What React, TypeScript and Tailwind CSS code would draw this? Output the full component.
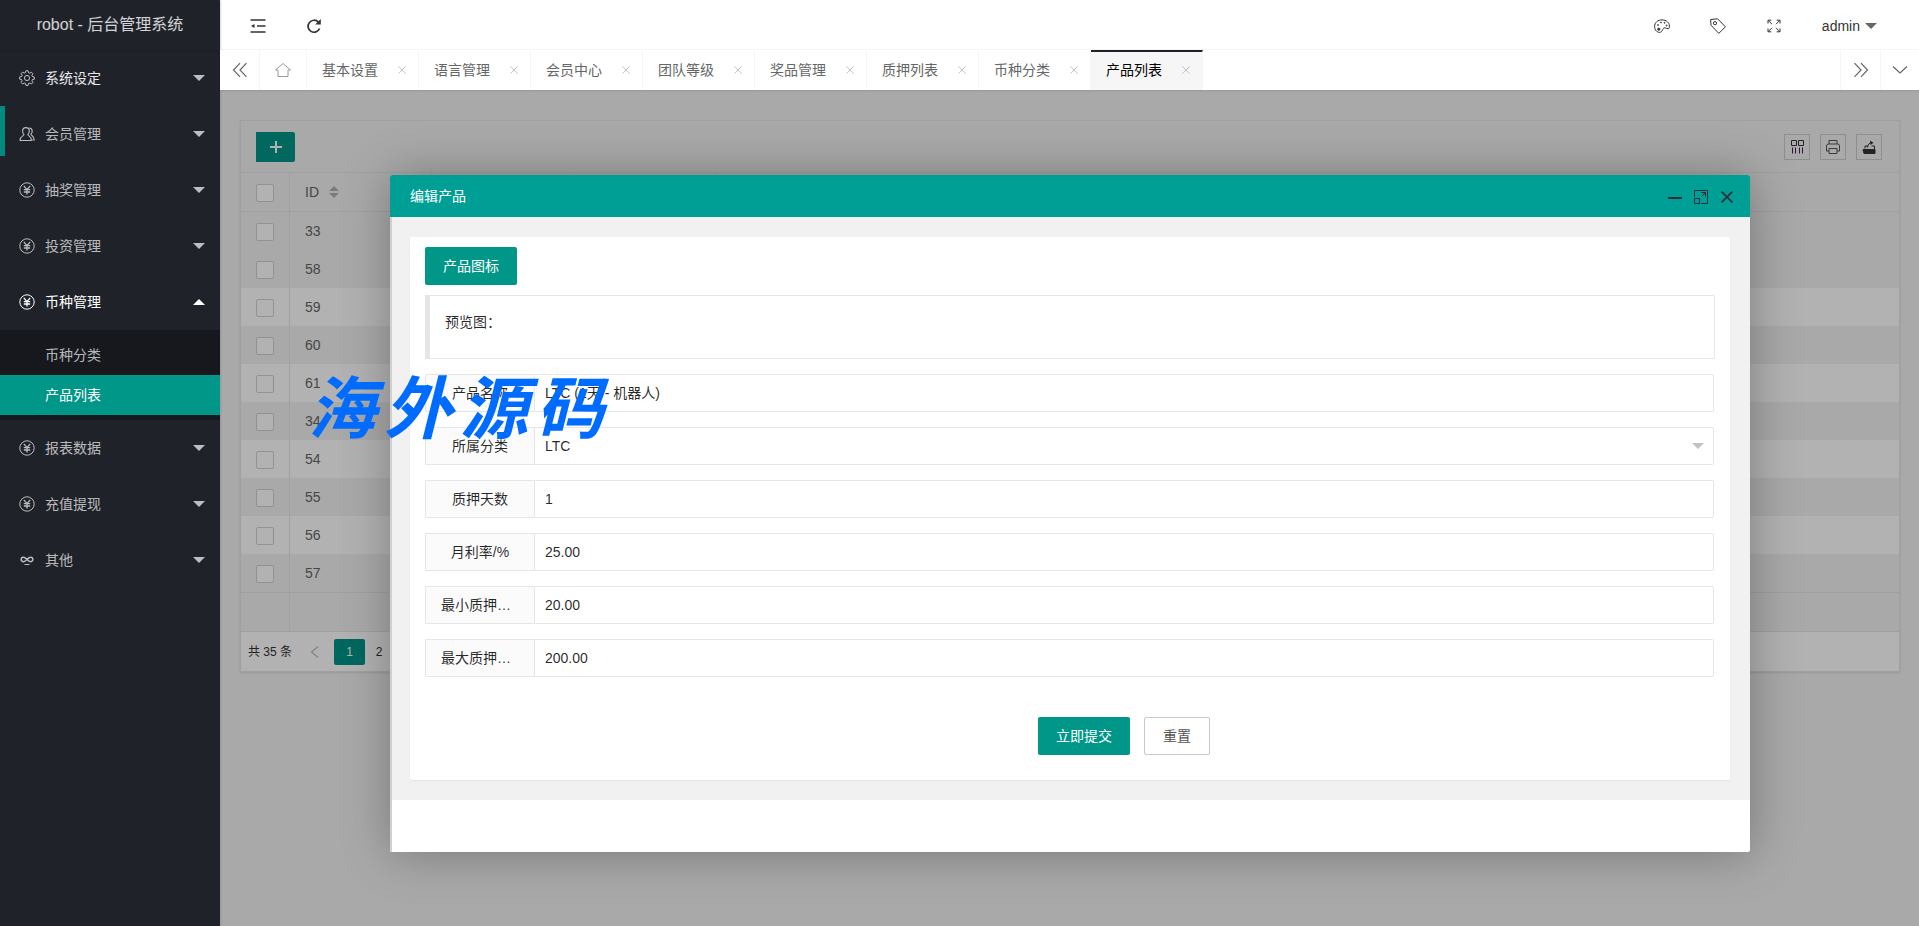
import type { ReactNode } from "react";

type IconProps = { children: ReactNode; size?: string; box?: string; width?: number };

function Icon({ children, size = "size-4", box = "0 0 16 16", width = 1 }: IconProps) {
  return (
    <svg
      className={`${size} shrink-0`}
      viewBox={box}
      fill="none"
      stroke="currentColor"
      strokeWidth={width}
      aria-hidden="true"
    >
      {children}
    </svg>
  );
}

const Caret = ({ up = false }: { up?: boolean }) => (
  <svg className="h-1.5 w-3 shrink-0" viewBox="0 0 12 6" fill="currentColor" aria-hidden="true">
    <path d={up ? "M0 6h12L6 0z" : "M0 0h12L6 6z"} />
  </svg>
);

const GearIcon = () => (
  <Icon width={1}>
    <circle cx="8" cy="8" r="2.600" />
    <path d="M6.900.8h2.200l.4 1.900 1.300.5 1.600-1 1.500 1.500-1 1.600.5 1.300 1.900.4v2.200l-1.900.4-.5 1.300 1 1.600-1.500 1.500-1.600-1-1.300.5-.4 1.900H6.900l-.4-1.900-1.300-.5-1.600 1-1.500-1.500 1-1.600-.5-1.300-1.900-.4V6.900l1.900-.4.5-1.300-1-1.600 1.500-1.500 1.600 1 1.300-.5z" />
  </Icon>
);

const UsersIcon = () => (
  <Icon width={1.1}>
    <path d="M7 1.600c2 0 3.300 1.500 3.300 3.600 0 1.500-.7 2.600-1.500 3.400 0 1.500 3.600 1.400 3.600 5.900H1c0-4.500 4-4.400 4-5.900-.8-.8-1.400-1.900-1.400-3.400C3.600 3.100 5 1.600 7 1.600z" />
    <path d="M10.200 2c2 .1 3 1.500 3 3.200 0 1.400-.6 2.300-1.300 3 0 1.400 3.300 1.500 3.300 5.800h-2" />
  </Icon>
);

const YenIcon = () => (
  <Icon>
    <circle cx="8" cy="8" r="7.200" />
    <path d="M4.800 3.800 8 7.600l3.200-3.800M8 7.600v5M4.800 7.600h6.400M4.800 10h6.400" strokeWidth="1.300" />
  </Icon>
);

const LoopIcon = () => (
  <Icon width={1.5}>
    <path d="M8 7.500C6.600 6.100 5.700 5.300 4.400 5.300a2.200 2.200 0 0 0 0 4.400C5.700 9.700 6.600 9 8 7.500s2.300-2.200 3.600-2.200a2.200 2.200 0 0 1 0 4.400C10.300 9.700 9.400 9 8 7.500z" />
    <path d="M5.500 12.500h5" strokeWidth="1" />
  </Icon>
);

const CloseIcon = ({ size = "size-2", width = 1 }: { size?: string; width?: number }) => (
  <Icon size={size} box="0 0 8 8" width={width}>
    <path d="M.4.4l7.200 7.200M7.600.4.4 7.600" />
  </Icon>
);

type MenuEntry = { label: string; icon: ReactNode; open?: boolean; marked?: boolean; bright?: boolean };

const menu: MenuEntry[] = [
  { label: "系统设定", icon: <GearIcon />, bright: true },
  { label: "会员管理", icon: <UsersIcon />, marked: true },
  { label: "抽奖管理", icon: <YenIcon /> },
  { label: "投资管理", icon: <YenIcon /> },
  { label: "币种管理", icon: <YenIcon />, open: true },
  { label: "报表数据", icon: <YenIcon /> },
  { label: "充值提现", icon: <YenIcon /> },
  { label: "其他", icon: <LoopIcon /> },
];

const tabs = ["基本设置", "语言管理", "会员中心", "团队等级", "奖品管理", "质押列表", "币种分类", "产品列表"];

const rows = [33, 58, 59, 60, 61, 34, 54, 55, 56, 57];

const fields = [
  { id: "name", label: "产品名称", value: "LTC (1天 - 机器人)" },
  { id: "category", label: "所属分类", value: "LTC", select: true },
  { id: "days", label: "质押天数", value: "1" },
  { id: "rate", label: "月利率/%", value: "25.00" },
  { id: "min", label: "最小质押…", value: "20.00", clipped: true },
  { id: "max", label: "最大质押…", value: "200.00", clipped: true },
];

function Sidebar() {
  return (
    <aside className="z-10 w-[220px] shrink-0 bg-[#20222a] text-white/70 shadow-[1px_0_2px_rgba(0,0,0,0.1)]">
      <div className="flex h-[50px] items-center justify-center text-base text-white/80 shadow-[0_1px_2px_rgba(0,0,0,0.15)]">
        robot - 后台管理系统
      </div>
      <nav>
        {menu.map((item) => (
          <div key={item.label}>
            <button
              type="button"
              className={`relative flex h-14 w-full items-center pl-[19px] pr-[15px] ${item.open ? "text-white" : ""}`}
            >
              {item.marked && <span className="absolute left-0 top-0 h-[50px] w-[5px] bg-[#009688]/90" />}
              {item.icon}
              <span className={`ml-2.5 flex-1 text-left ${item.bright ? "text-white/90" : ""}`}>{item.label}</span>
              <Caret up={item.open} />
            </button>
            {item.open && (
              <div className="bg-[#17181e] py-[5px]">
                <a href="#category" className="flex h-10 items-center pl-[45px]">
                  币种分类
                </a>
                <a href="#product" className="flex h-10 items-center bg-[#009688] pl-[45px] text-white">
                  产品列表
                </a>
              </div>
            )}
          </div>
        ))}
      </nav>
    </aside>
  );
}

function TopBar() {
  const cell = "flex h-full w-14 items-center justify-center";
  return (
    <header className="flex h-[50px] items-center border-b border-[#f6f6f6] bg-white pl-[10px] pt-0.5 text-[#333]">
      <button type="button" aria-label="侧边伸缩" className={cell}>
        <Icon width={1.500}>
          <path d="M.5 2h15M7 8h8.500M.5 14h15" />
          <path d="M1 8l3.500-2v4z" fill="currentColor" stroke="none" />
        </Icon>
      </button>
      <button type="button" aria-label="刷新" className={cell}>
        <Icon width={1.700}>
          <path d="M12.500 4.200A6 6 0 1 0 13.600 10.500" />
          <path d="M14.800 1v5.600H9.200z" fill="currentColor" stroke="none" />
        </Icon>
      </button>
      <div className="flex-1" />
      <button type="button" aria-label="主题" className={cell}>
        <Icon>
          <path d="M4.500 14.300C2 13.600.6 11.400.6 8.400c0-3.900 3.200-6.500 7.400-6.500 4.300 0 7.400 2.700 7.400 6.200 0 1.700-.2 2.600-1.100 2.600-1.300 0-1.900-.9-3.500-.9-1.500 0-1.700 1.200-2.400 2.500-.8 1.500-2.200 2.500-3.900 2z" />
          <circle cx="4" cy="7" r=".5" />
          <circle cx="7" cy="4.500" r=".5" />
          <circle cx="10.600" cy="4.800" r=".5" />
          <circle cx="12.600" cy="7.500" r=".5" />
          <circle cx="4.800" cy="11.200" r="1.100" fill="currentColor" />
        </Icon>
      </button>
      <button type="button" aria-label="便签" className={cell}>
        <Icon>
          <path d="M.6 1.500 1 7.200l7.800 8.200 6.600-6.600L7.600.8z" strokeLinejoin="round" />
          <circle cx="5" cy="5.200" r="1.600" />
        </Icon>
      </button>
      <button type="button" aria-label="全屏" className={cell}>
        <Icon>
          <path d="M2 5.500V2.200h3.300M2.300 2.500l3.700 3.700M10.700 2.200H14v3.300M13.700 2.500 10 6.200M2 10.500v3.300h3.300M2.300 13.500 6 9.800M10.700 13.800H14v-3.300M13.700 13.500 10 9.800" />
        </Icon>
      </button>
      <button type="button" className="flex h-full items-center gap-[5px] pl-5 pr-[42px]">
        <span>admin</span>
        <span className="text-[#666]">
          <Caret />
        </span>
      </button>
    </header>
  );
}

function TabBar() {
  return (
    <div className="z-10 flex h-10 bg-white text-[#666] shadow-[0_1px_2px_rgba(0,0,0,0.1)]">
      <button
        type="button"
        aria-label="向左"
        className="flex w-10 items-center justify-center border-r border-[#f6f6f6]"
      >
        <Icon width={1.200}>
          <path d="M8 1.200 1.500 8 8 14.800M14.500 1.200 8 8l6.500 6.800" />
        </Icon>
      </button>
      <button
        type="button"
        aria-label="主页"
        className="flex w-[47px] items-center justify-center border-r border-[#f6f6f6] text-[#999]"
      >
        <Icon>
          <path d="M.5 8 8 1.500 15.500 8H13v6.500H3V8z" strokeLinejoin="round" />
        </Icon>
      </button>
      {tabs.map((tab, i) => {
        const active = i === tabs.length - 1;
        return (
          <div
            key={tab}
            className={`flex w-28 items-center justify-between border-r border-t-2 border-r-[#f6f6f6] pl-[15px] pr-2 pb-0.5 ${
              active ? "border-t-[#20222a] bg-[#f6f6f6] text-black" : "border-t-transparent"
            }`}
          >
            <a href={`#tab-${i}`}>{tab}</a>
            <button type="button" aria-label="关闭" className="p-1 text-[#c2c2c2]">
              <CloseIcon />
            </button>
          </div>
        );
      })}
      <div className="flex-1" />
      <button
        type="button"
        aria-label="向右"
        className="flex w-10 items-center justify-center border-l border-[#f6f6f6]"
      >
        <Icon width={1.200}>
          <path d="M1.500 1.200 8 8l-6.500 6.800M8 1.200 14.500 8 8 14.800" />
        </Icon>
      </button>
      <button
        type="button"
        aria-label="更多"
        className="flex w-[39px] items-center justify-center border-l border-[#f6f6f6]"
      >
        <Icon width={1.200}>
          <path d="M1 4.500l7 6.500 7-6.500" />
        </Icon>
      </button>
    </div>
  );
}

const Tick = ({ label }: { label: string }) => (
  <input
    type="checkbox"
    aria-label={label}
    className="block size-[18px] appearance-none rounded-xs border border-[#d2d2d2] bg-white"
  />
);

function ProductTable() {
  const tool = "flex size-[26px] items-center justify-center border border-[#ccc] text-[#333]";
  const fixedCell = "border-r border-[#e6e6e6] pl-[15px] pt-0.5";
  return (
    <section className="border border-[#e6e6e6] text-[#666] shadow-[0_1px_2px_rgba(0,0,0,0.1)]">
      <div className="flex h-[52px] items-center gap-2.5 border-b border-[#e6e6e6] pl-[15px] pr-[17px]">
        <button
          type="button"
          aria-label="添加"
          className="flex h-[30px] w-[39px] items-center justify-center rounded-r-xs bg-[#009688] text-white"
        >
          <Icon size="size-3" box="0 0 12 12" width={2}>
            <path d="M6 0v12M0 6h12" />
          </Icon>
        </button>
        <div className="flex-1" />
        <button type="button" aria-label="筛选列" className={tool}>
          <Icon width={1}>
            <path d="M2.500 1.500h5v5h-5zM9.500 1.500h5v5h-5z" />
            <path d="M3.500 8.500v6M6.500 8.500v6M10.500 8.500v6M13.500 8.500v6" stroke="#4a1a5a" />
          </Icon>
        </button>
        <button type="button" aria-label="打印" className={tool}>
          <span className="text-[#555]">
            <Icon width={1}>
              <path d="M4 5V1.500h8V5M4 12H1.500V7q0-2 2-2h9q2 0 2 2v5H12M4 9.500h8v5H4z" strokeLinejoin="round" />
            </Icon>
          </span>
        </button>
        <button type="button" aria-label="导出" className={tool}>
          <Icon width={1}>
            <path d="M2 10.500h12v4H3z" fill="currentColor" />
            <path d="M4 9.500V7h3M10.500 7h3v3.500M6.500 8.500c.5-3 1.500-4.500 4-4.800" />
            <path d="M9 1.500l3.500 2.200L9.500 6z" fill="currentColor" stroke="none" />
          </Icon>
        </button>
      </div>
      <table className="w-full table-fixed border-separate border-spacing-0">
        <colgroup>
          <col className="w-[49px]" />
          <col className="w-[142px]" />
          <col className="w-[142px]" />
          <col className="w-[142px]" />
          <col />
        </colgroup>
        <thead>
          <tr className="h-[39px]">
            <th className={`border-b ${fixedCell}`}>
              <Tick label="全选" />
            </th>
            <th className="border-b border-r border-[#e6e6e6] pl-[15px] text-left font-normal">
              <span className="flex items-center gap-2.5">
                ID
                <svg className="h-3 w-2.5 text-[#b2b2b2]" viewBox="0 0 10 12" fill="currentColor" aria-hidden="true">
                  <path d="M0 5h10L5 0zM0 7h10l-5 5z" />
                </svg>
              </span>
            </th>
            <th className="border-b border-r border-[#e6e6e6]" />
            <th className="border-b border-r border-[#e6e6e6]" />
            <th className="border-b border-[#e6e6e6]" />
          </tr>
        </thead>
        <tbody>
          {rows.map((id, i) => (
            <tr key={id} className={`h-[38px] ${i > 0 && i % 2 === 0 ? "bg-white" : ""}`}>
              <td className={fixedCell}>
                <Tick label={`选择 ${id}`} />
              </td>
              <td className="pl-[15px]">{id}</td>
              <td colSpan={3} />
            </tr>
          ))}
        </tbody>
        <tfoot>
          <tr className="h-10">
            <td className="border-y border-r border-[#e6e6e6]" />
            <td colSpan={4} className="border-y border-[#e6e6e6]" />
          </tr>
        </tfoot>
      </table>
      <div className="flex h-[39px] items-center bg-white pl-[7px] pt-px text-xs text-[#333]">
        <span>共 35 条</span>
        <button type="button" aria-label="上一页" className="ml-[15px] flex w-4 justify-center text-[#bbb]">
          <Icon size="size-3" box="0 0 12 12" width={1.200}>
            <path d="M9 .5 2.500 6 9 11.500" />
          </Icon>
        </button>
        <button type="button" className="ml-[11px] h-[26px] w-[31px] rounded-xs bg-[#009688] text-white">
          1
        </button>
        <button type="button" className="h-[26px] w-7">
          2
        </button>
      </div>
    </section>
  );
}

function EditDialog() {
  return (
    <div
      role="dialog"
      aria-labelledby="dialog-title"
      className="w-full rounded-xs bg-white text-black/85 shadow-[1px_1px_50px_rgba(0,0,0,0.3)]"
    >
      <div className="flex h-[42px] items-center rounded-t-xs bg-[#009f95] pl-5 pr-4 text-[#2e2d3c]">
        <h2 id="dialog-title" className="flex-1 text-white">
          编辑产品
        </h2>
        <div className="flex items-center gap-3 pt-0.5">
          <button type="button" aria-label="最小化">
            <Icon size="size-3.5" box="0 0 14 14" width={2}>
              <path d="M0 8h14" />
            </Icon>
          </button>
          <button type="button" aria-label="最大化">
            <Icon size="size-3.5" box="0 0 14 14">
              <path d="M.5 7V.5h13v13H7M.5 8.500h5v5h-5zM7 7l4-4M7.500 2.500h4v4" />
            </Icon>
          </button>
          <button type="button" aria-label="关闭" className="px-px">
            <CloseIcon size="size-3" width={1.100} />
          </button>
        </div>
      </div>
      <div className="border-l-2 border-[#d0d0d0]">
        <div className="bg-[#f1f1f1] py-5 pl-[18px] pr-5">
          <form
            className="rounded-xs bg-white px-[15px] pb-[25px] pt-2.5 shadow-[0_1px_2px_rgba(0,0,0,0.05)]"
            onSubmit={(e) => e.preventDefault()}
          >
            <button type="button" className="block h-[38px] w-[92px] rounded-xs bg-[#009688] text-white">
              产品图标
            </button>
            <div className="mt-2.5 h-16 rounded-r-xs border border-l-[5px] border-[#e6e6e6] p-[15px] leading-[22px]">
              预览图：
            </div>
            <div className="mt-[15px] flex flex-col gap-[15px]">
              {fields.map((f) => (
                <div key={f.id} className="flex h-[38px] pr-px">
                  <label
                    htmlFor={f.id}
                    className={`flex w-[109px] shrink-0 items-center rounded-l-xs border border-r-0 border-[#e6e6e6] bg-[#fbfbfb] pl-[15px] ${
                      f.clipped ? "" : "justify-center pr-[15px]"
                    }`}
                  >
                    {f.label}
                  </label>
                  {f.select ? (
                    <div className="relative flex-1">
                      <select
                        id={f.id}
                        className="size-full appearance-none rounded-r-xs border border-[#e6e6e6] bg-white pl-2.5"
                      >
                        <option>{f.value}</option>
                      </select>
                      <span className="pointer-events-none absolute right-2.5 top-4 text-[#c2c2c2]">
                        <Caret />
                      </span>
                    </div>
                  ) : (
                    <input
                      id={f.id}
                      type="text"
                      defaultValue={f.value}
                      className="min-w-0 flex-1 rounded-r-xs border border-[#e6e6e6] bg-white pl-2.5"
                    />
                  )}
                </div>
              ))}
            </div>
            <div className="mt-10 flex justify-center gap-3.5 pl-[108px]">
              <button type="submit" className="h-[38px] w-[92px] rounded-xs bg-[#009688] text-white">
                立即提交
              </button>
              <button
                type="reset"
                className="h-[38px] w-[66px] rounded-xs border border-[#c9c9c9] bg-white text-[#555]"
              >
                重置
              </button>
            </div>
          </form>
        </div>
        <div className="h-[52px]" />
      </div>
    </div>
  );
}

export default function App() {
  return (
    <div className="relative flex min-h-screen overflow-hidden font-['Liberation_Sans','Noto_Sans_CJK_SC',sans-serif] text-sm">
      <Sidebar />
      <div className="flex min-w-0 flex-1 flex-col">
        <TopBar />
        <TabBar />
        <main className="relative flex-1 bg-[#f2f2f2] pb-10 pl-5 pr-[19px] pt-[30px]">
          <ProductTable />
          <div className="absolute inset-0 bg-black/30 pl-[170px] pr-[169px] pt-[85px]">
            <EditDialog />
          </div>
        </main>
      </div>
      <div className="pointer-events-none absolute left-[308px] top-[374px] z-20 flex gap-2 whitespace-nowrap font-['Liberation_Serif','Noto_Sans_CJK_SC',serif] text-[68px] font-bold italic leading-[72px] text-[#006cff]">
        <span>海</span>
        <span>外</span>
        <span>源</span>
        <span>码</span>
      </div>
    </div>
  );
}
